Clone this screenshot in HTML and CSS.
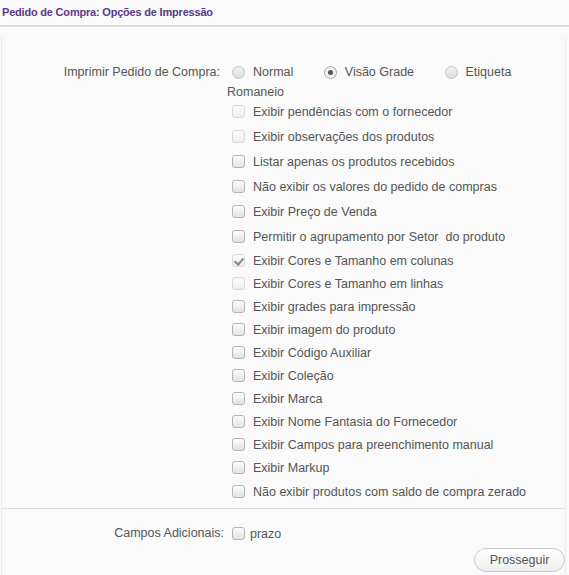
FILE: index.html
```html
<!DOCTYPE html>
<html lang="pt-BR">
<head>
<meta charset="utf-8">
<title>Pedido de Compra: Opções de Impressão</title>
<link rel="stylesheet" href="styles.css">
</head>
<body>
<div class="page">
  <div class="title">Pedido de Compra: Opções de Impressão</div>
  <div class="panel">
    <div class="section">
      <div class="label">Imprimir Pedido de Compra:</div>
      <div class="content">
        <div class="radios">
          <span class="opt"><span class="radio"></span>Normal</span>
          <span class="opt"><span class="radio checked"></span>Visão Grade</span>
          <span class="opt"><span class="radio"></span>Etiqueta</span>
          <span class="opt-plain">Romaneio</span>
        </div>
        <div class="checks">
          <div class="row r25"><span class="cb disabled"></span>Exibir pendências com o fornecedor</div>
          <div class="row r25"><span class="cb disabled"></span>Exibir observações dos produtos</div>
          <div class="row r25"><span class="cb"></span>Listar apenas os produtos recebidos</div>
          <div class="row r25"><span class="cb"></span>Não exibir os valores do pedido de compras</div>
          <div class="row r25"><span class="cb"></span>Exibir Preço de Venda</div>
          <div class="row r25"><span class="cb"></span>Permitir o agrupamento por Setor&nbsp; do produto</div>
          <div class="row"><span class="cb disabled checked"></span>Exibir Cores e Tamanho em colunas</div>
          <div class="row"><span class="cb disabled"></span>Exibir Cores e Tamanho em linhas</div>
          <div class="row"><span class="cb"></span>Exibir grades para impressão</div>
          <div class="row"><span class="cb"></span>Exibir imagem do produto</div>
          <div class="row"><span class="cb"></span>Exibir Código Auxiliar</div>
          <div class="row"><span class="cb"></span>Exibir Coleção</div>
          <div class="row"><span class="cb"></span>Exibir Marca</div>
          <div class="row"><span class="cb"></span>Exibir Nome Fantasia do Fornecedor</div>
          <div class="row"><span class="cb"></span>Exibir Campos para preenchimento manual</div>
          <div class="row"><span class="cb"></span>Exibir Markup</div>
          <div class="row r25"><span class="cb"></span>Não exibir produtos com saldo de compra zerado</div>
        </div>
      </div>
    </div>
    <div class="section extra">
      <div class="label label-extra">Campos Adicionais:</div>
      <div class="content">
        <div class="row"><span class="cb small"></span>prazo</div>
      </div>
    </div>
    <div class="actions">
      <button class="btn" type="button">Prosseguir</button>
    </div>
  </div>
</div>
</body>
</html>
```
FILE: styles.css
```css
* { box-sizing: border-box; }
html, body { margin: 0; padding: 0; background: #fafafa; }
body {
  font-family: "Liberation Sans", Arial, sans-serif;
  font-size: 12.5px;
  color: #555;
}
.page { width: 569px; height: 575px; overflow: hidden; }
.title {
  height: 27px;
  padding: 6px 0 0 2px;
  font-size: 11px;
  letter-spacing: -0.2px;
  font-weight: bold;
  color: #5a3889;
  border-bottom: 2px solid #dcdcdc;
}
.panel {
  margin: 10px 3px 0 1px;
  border-left: 1px solid #ededed;
  border-right: 1px solid #ededed;
  height: 540px;
}
.section { display: flex; }
.section:first-child { padding-top: 27px; }
.label {
  width: 225px;
  flex: none;
  text-align: right;
  padding-right: 7px;
  line-height: 17px;
}
.content { flex: 1; }
.radios { line-height: 17px; }
.opt { display: inline-flex; align-items: center; margin-right: 27px; }
.opt:first-child { margin-left: 5px; }
.opt-plain { display: block; }
.radio {
  width: 13px; height: 13px; border-radius: 50%;
  border: 1px solid #c4c4c4;
  background: linear-gradient(#f4f4f4, #dcdcdc);
  margin-right: 8px;
  position: relative;
}
.radio.checked { background: #f2f2f2; border-color: #a8a8a8; }
.radio.checked::after {
  content: ""; position: absolute; left: 3px; top: 3px;
  width: 5px; height: 5px; border-radius: 50%; background: #555;
}
.checks { margin-top: -2px; }
.row { display: flex; align-items: center; height: 23px; }
.row.r25 { height: 25px; }
.cb {
  width: 13px; height: 13px; border-radius: 3px;
  border: 1px solid #b4b4b4;
  background: linear-gradient(#fdfdfd, #e2e2e2);
  margin: 0 8px 0 5px;
  position: relative;
  flex: none;
}
.cb.disabled { border-color: #dadada; background: linear-gradient(#fbfbfb, #efefef); }
.cb.checked::after {
  content: ""; position: absolute; left: 3px; top: 1px;
  width: 4px; height: 7px; border: solid #8a8a8a; border-width: 0 2px 2px 0;
  transform: rotate(40deg);
}
.cb.small { margin-right: 5px; }
.extra {
  margin-top: 4px;
  border-top: 1px solid #dedede;
  padding-top: 13px;
}
.label-extra { line-height: 23px; padding-right: 3px; }
.actions { display: flex; justify-content: flex-end; padding: 3px 0 0 0; }
.btn {
  font-family: inherit; font-size: 12.5px; color: #555;
  height: 24px; width: 91px; padding: 0;
  border: 1px solid #c8c8c8; border-radius: 12px;
  background: linear-gradient(#ffffff, #eeeeee);
}
```
